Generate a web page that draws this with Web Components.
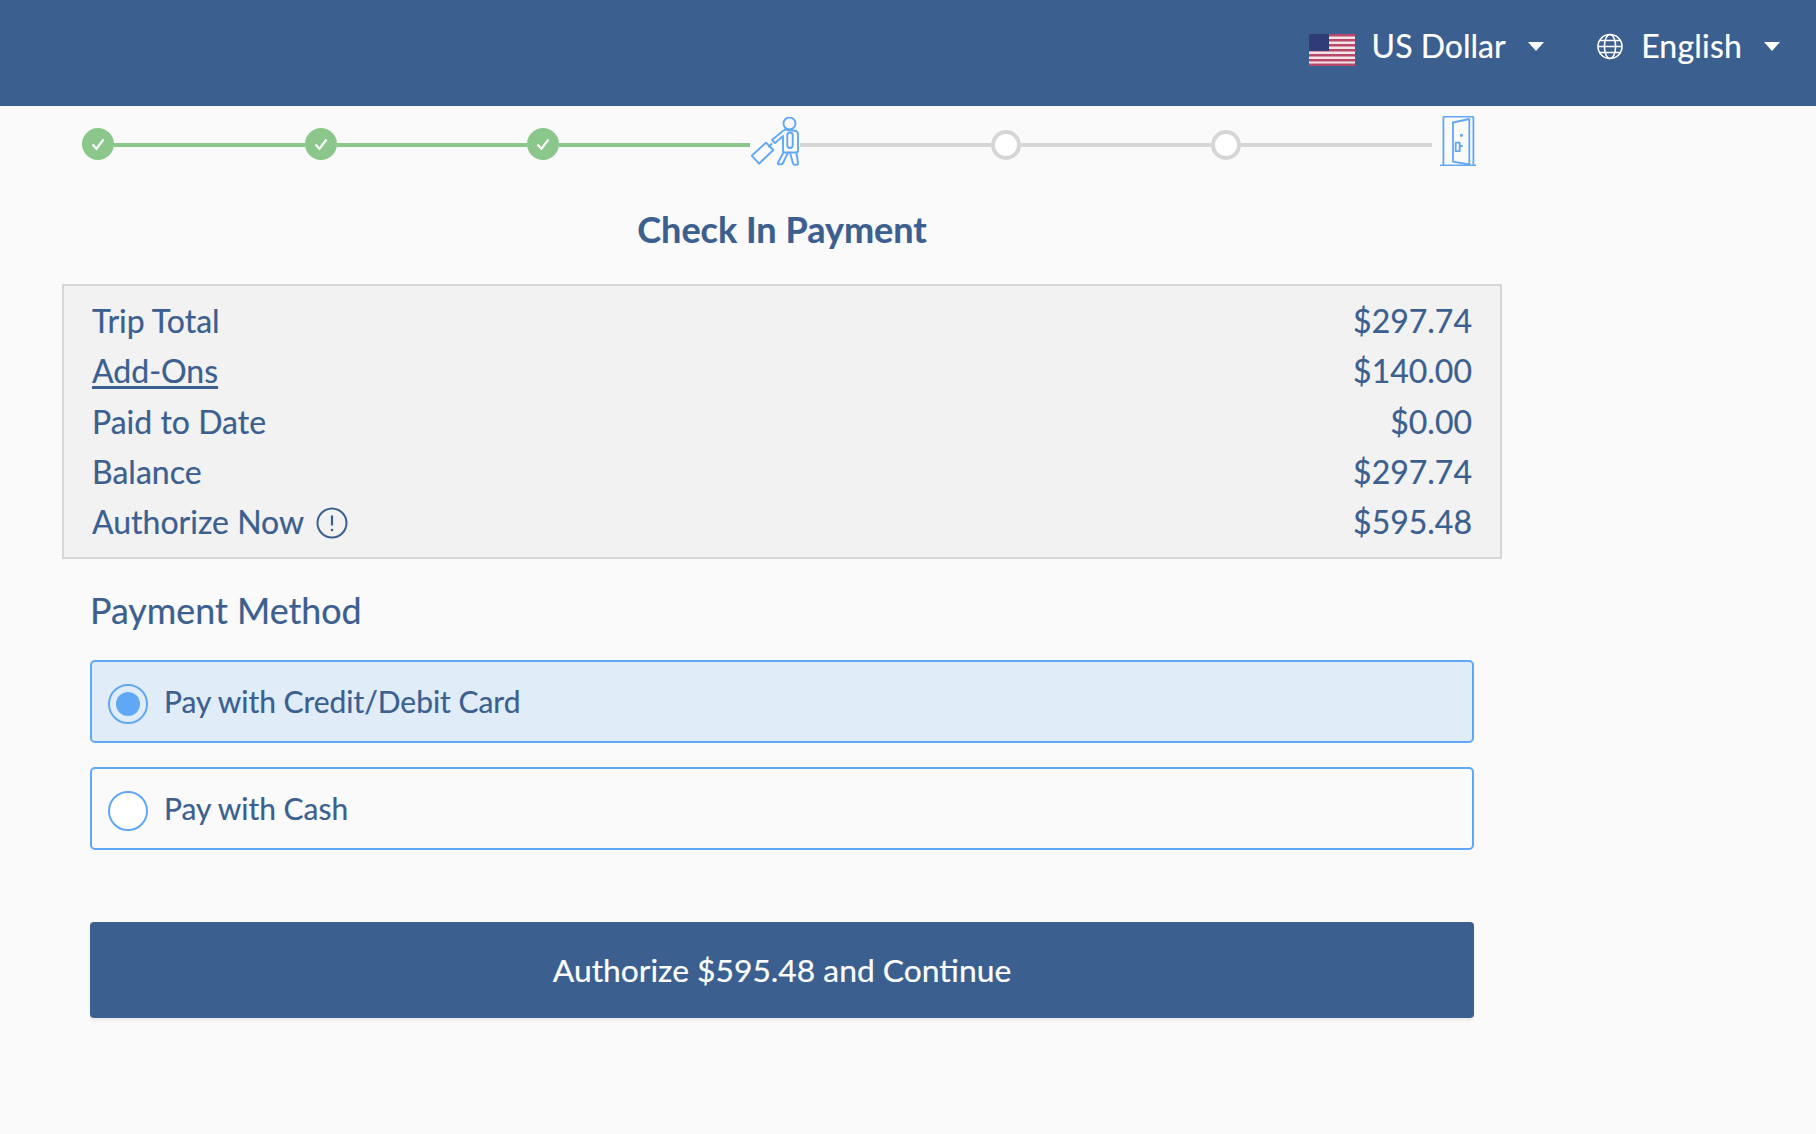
<!DOCTYPE html>
<html lang="en">
<head>
<meta charset="utf-8">
<title>Check In Payment</title>
<style>
  html, body { margin: 0; background: #fafafa; }
  body { font-family: Lato, "Noto Sans", sans-serif; color: #3b5f8f; min-height: 1134px; -webkit-text-stroke-width: 0.2px; }
</style>
</head>
<body>
<app-header>
  <header-select>
    <svg slot="icon" style="margin-top:7px" width="46" height="32" viewBox="0 0 46 32">
      <rect width="46" height="32" fill="#f3e4e8"/>
      <g fill="#b8486a">
        <rect y="0" width="46" height="2.5"/><rect y="5" width="46" height="2.5"/><rect y="10" width="46" height="2.5"/>
        <rect y="15" width="46" height="2.5"/><rect y="20" width="46" height="2.5"/><rect y="25" width="46" height="2.5"/><rect y="29.5" width="46" height="2.5"/>
      </g>
      <rect width="20" height="17" fill="#2f3c78"/>
    </svg>
    US Dollar
  </header-select>
  <header-select style="letter-spacing:.2px">
    <svg slot="icon" style="margin-right:1.5px" width="26" height="27" viewBox="0 0 26 27" fill="none" stroke="#fff" stroke-width="1.6">
      <circle cx="13" cy="13.5" r="12"/>
      <ellipse cx="13" cy="13.5" rx="5.6" ry="12"/>
      <path d="M1 13.5h24M2.8 7.5h20.4M2.8 19.5h20.4"/>
    </svg>
    English
  </header-select>
</app-header>
<check-stepper></check-stepper>
<payment-page heading="Check In Payment">
  <trip-summary>
    <summary-row amount="$297.74">Trip Total</summary-row>
    <summary-row amount="$140.00" link>Add-Ons</summary-row>
    <summary-row amount="$0.00">Paid to Date</summary-row>
    <summary-row amount="$297.74">Balance</summary-row>
    <summary-row amount="$595.48" info>Authorize Now</summary-row>
  </trip-summary>
  <payment-options heading="Payment Method">
    <payment-option selected>Pay with Credit/Debit Card</payment-option>
    <payment-option>Pay with Cash</payment-option>
  </payment-options>
  <primary-button>Authorize $595.48 and Continue</primary-button>
</payment-page>

<script>
class AppHeader extends HTMLElement {
  constructor() {
    super();
    this.attachShadow({ mode: "open" });
    this.shadowRoot.innerHTML = `
      <style>
        :host {
          display: flex;
          justify-content: flex-end;
          align-items: center;
          gap: 53px;
          height: 106px;
          padding: 0 36px 14px 0;
          box-sizing: border-box;
          background: #3b5f8f;
          color: #fff;
        }
      </style>
      <slot></slot>`;
  }
}

class HeaderSelect extends HTMLElement {
  constructor() {
    super();
    this.attachShadow({ mode: "open" });
    this.shadowRoot.innerHTML = `
      <style>
        :host { display: flex; align-items: center; font-size: 32px; line-height: 40px; }
        .icon { display: flex; margin-right: 17px; }
        .caret {
          margin-left: 22px;
          width: 0; height: 0;
          border-left: 8.5px solid transparent;
          border-right: 8.5px solid transparent;
          border-top: 9px solid #fff;
        }
        ::slotted(svg) { display: block; }
      </style>
      <span class="icon"><slot name="icon"></slot></span>
      <slot></slot>
      <span class="caret"></span>`;
  }
}

class CheckStepper extends HTMLElement {
  constructor() {
    super();
    this.attachShadow({ mode: "open" });
    const done = `<span class="dot done"><svg width="16" height="14" viewBox="0 0 16 14" fill="none" stroke="#fff" stroke-width="2.2"><path d="M2.5 7.5l4 4.2L13.5 2.5"/></svg></span>`;
    const todo = `<span class="dot"></span>`;
    this.shadowRoot.innerHTML = `
      <style>
        :host {
          display: flex;
          align-items: center;
          height: 56px;
          margin: 10px 0 0 82px;
          width: 1393.5px;
        }
        .dot {
          flex: none;
          width: 30px; height: 30px;
          margin-top: 2px;
          box-sizing: border-box;
          border-radius: 50%;
          border: 4px solid #d6d6d6;
          background: #fff;
          display: flex; align-items: center; justify-content: center;
        }
        .dot.done { width: 32px; height: 32px; margin-top: 0; background: #8bc78a; border: 0; }
        .line { flex: 1; height: 4px; margin-top: 1px; background: #d6d6d6; }
        .line.done { flex: none; width: 190.5px; background: #8bc78a; }
        .pic { flex: none; display: block; margin-bottom: 6px; }
        .traveler { margin: 0 -1px 4px 1.5px; }
        .door { margin-left: 7.5px; }
      </style>
      ${done}<span class="line done"></span>
      ${done}<span class="line done"></span>
      ${done}<span class="line done"></span>
      <svg class="pic traveler" width="50" height="50" viewBox="21 12 50 50" fill="none" stroke="#60a8f5" stroke-width="1.9" stroke-linejoin="round" stroke-linecap="round">
        <circle cx="59.5" cy="18.5" r="6"/>
        <path d="M55 24.5c4 1 9 1 11 1.500 1.500.5 2 1.500 2 3V46c0 1-.5 1.500-1.500 1.500H54.500c-1 0-1.500-.5-1.500-1.500V32"/>
        <path d="M53 31l-8 7-3-3 8.500-7c1.500-1.500 3-2.500 4.500-3.500"/>
        <rect x="57.300" y="27.500" width="5.400" height="15.500" rx="2.700"/>
        <path d="M53.500 47.500L48 57.500c-.8 1.500.5 1.800 1.500 1.800h2c.8 0 1-.3 1.500-1.300l5-10.500"/>
        <path d="M60 47.500l3 11c.3 1 .8 1.300 1.800 1.300h2c1 0 1.500-.8 1.300-1.800l-1.800-10.500"/>
        <path d="M21.700 50.700L36 37.700l7.300 7.300L29 58.700z"/>
        <path d="M39 41.500l2.500-2.500"/>
      </svg>
      <span class="line"></span>
      ${todo}<span class="line"></span>
      ${todo}<span class="line"></span>
      <svg class="pic door" width="36" height="50" viewBox="249.300 11 36 50" fill="none" stroke="#60a8f5" stroke-width="1.800" stroke-linejoin="round">
        <path d="M252.700 60V13c0-.8.5-1.300 1.300-1.300h27.500c.8 0 1.200.5 1.200 1.300v47"/>
        <path d="M249.300 60.500h36"/>
        <path d="M262.300 17.500l16.300-3.500v45.500l-16.300-2.800z"/>
        <path d="M265 37.700h4v8.500h-4zM269 41h3"/>
        <circle cx="270.700" cy="30.300" r=".7" fill="#60a8f5"/>
      </svg>`;
  }
}

class PaymentPage extends HTMLElement {
  constructor() {
    super();
    this.attachShadow({ mode: "open" });
    this.shadowRoot.innerHTML = `
      <style>
        :host { display: block; width: 1440px; margin: 0 0 0 62px; }
        h1 {
          margin: 35px 0 33px;
          text-align: center;
          font-size: 36px;
          line-height: 44px;
          font-weight: 700;
        }
      </style>
      <h1></h1>
      <slot></slot>`;
    this.shadowRoot.querySelector("h1").textContent = this.getAttribute("heading");
  }
}

class TripSummary extends HTMLElement {
  constructor() {
    super();
    this.attachShadow({ mode: "open" });
    this.shadowRoot.innerHTML = `
      <style>
        :host {
          display: block;
          box-sizing: border-box;
          height: 275px;
          padding: 9.500px 28px 0 28px;
          border: 2px solid #d6d6d6;
          background: #f2f2f2;
        }
      </style>
      <slot></slot>`;
  }
}

class SummaryRow extends HTMLElement {
  constructor() {
    super();
    this.attachShadow({ mode: "open" });
    const info = this.hasAttribute("info")
      ? `<svg width="32" height="32" viewBox="0 0 32 32" fill="none" stroke="#3b5f8f" stroke-width="2"><circle cx="16" cy="16" r="14.500"/><path d="M16 8.500v10" stroke-width="2.200"/><circle cx="16" cy="23" r="1.300" fill="#3b5f8f" stroke="none"/></svg>`
      : "";
    this.shadowRoot.innerHTML = `
      <style>
        :host {
          display: flex;
          justify-content: space-between;
          align-items: center;
          height: 50.300px;
          font-size: 32px;
        }
        .label { display: flex; align-items: center; gap: 12px; }
        .link { text-decoration: underline; text-underline-offset: 3px; }
        svg { display: block; margin-top: 2px; }
      </style>
      <span class="label"><span class="${this.hasAttribute("link") ? "link" : ""}"><slot></slot></span>${info}</span>
      <span class="amount"></span>`;
    this.shadowRoot.querySelector(".amount").textContent = this.getAttribute("amount");
  }
}

class PaymentOptions extends HTMLElement {
  constructor() {
    super();
    this.attachShadow({ mode: "open" });
    this.shadowRoot.innerHTML = `
      <style>
        :host { display: flex; flex-direction: column; gap: 24px; margin: 0 28px; }
        h2 { margin: 34px 0 7px; font-size: 35.850px; line-height: 36px; font-weight: 400; }
      </style>
      <h2></h2>
      <slot></slot>`;
    this.shadowRoot.querySelector("h2").textContent = this.getAttribute("heading");
  }
}

class PaymentOption extends HTMLElement {
  constructor() {
    super();
    this.attachShadow({ mode: "open" });
    this.shadowRoot.innerHTML = `
      <style>
        :host {
          display: flex;
          align-items: center;
          gap: 16px;
          box-sizing: border-box;
          height: 83px;
          padding: 0 16px 1px 16px;
          border: 2px solid #60a8f5;
          border-radius: 5px;
          font-size: 29.950px;
          cursor: pointer;
        }
        :host([selected]) { background: #e0edf9; }
        .radio {
          flex: none;
          width: 40px; height: 40px;
          margin-top: 5px;
          box-sizing: border-box;
          border: 2px solid #60a8f5;
          border-radius: 50%;
          background: #fff;
          display: flex; align-items: center; justify-content: center;
        }
        :host([selected]) .radio { background: transparent; }
        :host([selected]) .radio::after {
          content: "";
          width: 24px; height: 24px;
          border-radius: 50%;
          background: #60a8f5;
        }
      </style>
      <span class="radio"></span>
      <slot></slot>`;
  }
}

class PrimaryButton extends HTMLElement {
  constructor() {
    super();
    this.attachShadow({ mode: "open" });
    this.shadowRoot.innerHTML = `
      <style>
        :host {
          display: flex;
          align-items: center;
          justify-content: center;
          box-sizing: border-box;
          height: 96px;
          padding-bottom: 1px;
          margin: 72px 28px 0;
          border-radius: 4px;
          background: #3b5f8f;
          color: #fff;
          font-size: 31.800px;
          box-shadow: 0 3px 3px rgba(0, 0, 0, 0.06);
          cursor: pointer;
        }
      </style>
      <slot></slot>`;
  }
}

customElements.define("app-header", AppHeader);
customElements.define("header-select", HeaderSelect);
customElements.define("check-stepper", CheckStepper);
customElements.define("payment-page", PaymentPage);
customElements.define("trip-summary", TripSummary);
customElements.define("summary-row", SummaryRow);
customElements.define("payment-options", PaymentOptions);
customElements.define("payment-option", PaymentOption);
customElements.define("primary-button", PrimaryButton);
</script>
</body>
</html>
